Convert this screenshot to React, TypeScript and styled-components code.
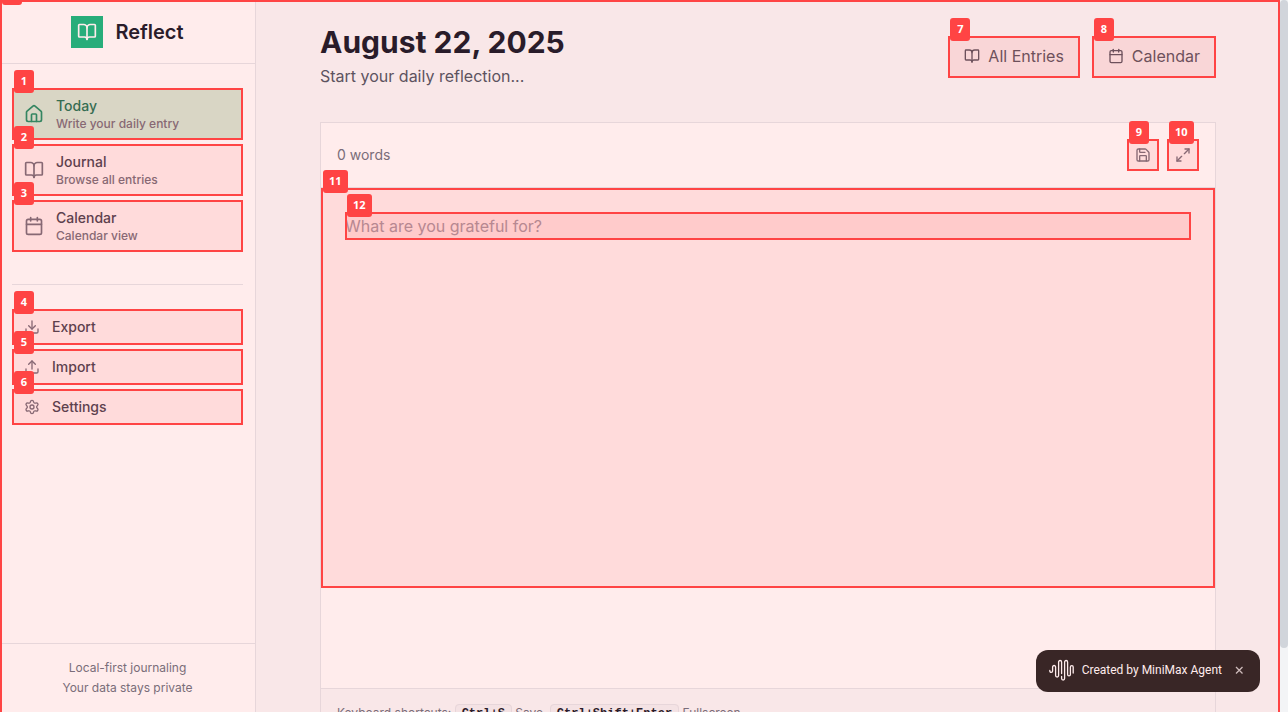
import React from "react";
import styled, { createGlobalStyle, css } from "styled-components";
import {
  BookOpen,
  Calendar,
  Download,
  House,
  Maximize2,
  Save,
  Settings,
  Upload,
} from "lucide-react";

const color = {
  ink: "#111827",
  heading: "#374151",
  body: "#4b5563",
  muted: "#6b7280",
  faint: "#9ca3af",
  thumb: "#d1d5db",
  line: "#e5e7eb",
  soft: "#f3f4f6",
  page: "#f9fafb",
  mark: "#ff4444",
};

const GlobalStyle = createGlobalStyle`
  *, *::before, *::after { box-sizing: border-box; }
  body {
    margin: 0;
    font-family: Inter, "Liberation Sans", sans-serif;
    font-size: 16px;
    line-height: 24px;
    color: ${color.ink};
    background: ${color.page};
  }
  h1, p { margin: 0; }
  a { color: inherit; text-decoration: none; }
  button { font: inherit; cursor: pointer; }
`;

const Window = styled.div`
  display: flex;
  height: 100vh;
  overflow: hidden;
`;

const App = styled.div`
  position: relative;
  display: flex;
  flex: 1;
  min-width: 0;
  overflow: hidden;
`;

const ScrollTrack = styled.div`
  width: 8px;
  flex: none;
  background: ${color.soft};
`;

const ScrollThumb = styled.div`
  height: 91%;
  border-radius: 4px;
  background: ${color.thumb};
`;

/* Numbered highlight laid over an interactive element */
const MarkBox = styled.span<{ $page?: boolean }>`
  position: absolute;
  inset: 0;
  z-index: ${(p) => (p.$page ? 1 : 2)};
  border: 2px solid ${color.mark};
  background: rgba(255, 68, 68, 0.1);
  pointer-events: none;
  ${(p) => p.$page && css`border-bottom: 0;`}
`;

const MarkLabel = styled.span`
  position: absolute;
  top: -20px;
  left: 0;
  min-width: 20px;
  padding: 3px 6px 5px;
  border-radius: 3px;
  background: ${color.mark};
  color: #fff;
  font: bold 11px/15px "Open Sans", "Noto Sans", sans-serif;
  text-align: center;
`;

function Mark({ n, page }: { n: number; page?: boolean }) {
  return (
    <MarkBox $page={page} aria-hidden="true">
      <MarkLabel>{n}</MarkLabel>
    </MarkBox>
  );
}

const Sidebar = styled.aside`
  display: flex;
  flex-direction: column;
  flex: none;
  width: 256px;
  background: #fff;
  border-right: 1px solid ${color.line};
`;

const Brand = styled.div`
  display: flex;
  align-items: center;
  justify-content: center;
  gap: 12px;
  height: 64px;
  border-bottom: 1px solid ${color.line};
  font-size: 20px;
  font-weight: 600;
  line-height: 28px;
`;

const BrandMark = styled.span`
  display: grid;
  place-items: center;
  width: 32px;
  height: 32px;
  background: #10b981;
  color: #fff;
`;

const Nav = styled.nav`
  display: flex;
  flex-direction: column;
  gap: 4px;
  padding: 24px 12px 32px;
`;

const NavLink = styled.a<{ $active?: boolean }>`
  position: relative;
  display: flex;
  align-items: center;
  gap: 12px;
  padding: 8px 12px;
  font-size: 14px;
  font-weight: 500;
  line-height: 20px;
  color: ${(p) => (p.$active ? "#047857" : color.heading)};
  background: ${(p) => (p.$active ? "#d1fae5" : "transparent")};
  svg { color: ${(p) => (p.$active ? "#059669" : color.muted)}; }
`;

const NavHint = styled.span`
  display: block;
  font-size: 12px;
  line-height: 16px;
  color: ${color.muted};
`;

const Tools = styled.div`
  display: flex;
  flex-direction: column;
  gap: 4px;
  margin: 0 12px;
  padding-top: 24px;
  border-top: 1px solid ${color.line};
`;

const ToolButton = styled.button`
  position: relative;
  display: flex;
  align-items: center;
  gap: 12px;
  padding: 8px 12px;
  border: 0;
  background: transparent;
  font-size: 14px;
  font-weight: 500;
  line-height: 20px;
  color: ${color.heading};
  svg { color: ${color.muted}; }
`;

const SidebarFooter = styled.footer`
  display: grid;
  gap: 4px;
  margin-top: auto;
  padding: 16px;
  border-top: 1px solid ${color.line};
  text-align: center;
  font-size: 12px;
  line-height: 16px;
  color: ${color.muted};
`;

const Main = styled.main`
  flex: 1;
  min-width: 0;
  padding: 24px 64px;
`;

const Content = styled.div`
  max-width: 896px;
  margin: 0 auto;
`;

const PageHeader = styled.header`
  display: flex;
  align-items: center;
  justify-content: space-between;
  margin-bottom: 32px;
`;

const Title = styled.h1`
  margin-bottom: 4px;
  font-size: 30px;
  font-weight: 700;
  line-height: 36px;
`;

const Subtitle = styled.p`
  padding-bottom: 2px;
  color: ${color.body};
`;

const Actions = styled.div`
  display: flex;
  gap: 12px;
`;

const ActionButton = styled.button`
  position: relative;
  display: flex;
  align-items: center;
  gap: 8px;
  padding: 8px 16px 10px;
  border: 0;
  background: transparent;
  color: ${color.body};
`;

const Card = styled.section`
  border: 1px solid ${color.line};
  background: #fff;
`;

const Toolbar = styled.div`
  display: flex;
  align-items: center;
  justify-content: space-between;
  padding: 16px;
  border-bottom: 1px solid ${color.line};
  font-size: 14px;
  line-height: 20px;
  color: ${color.muted};
`;

const IconButtons = styled.div`
  display: flex;
  gap: 8px;
`;

const IconButton = styled.button`
  position: relative;
  display: grid;
  place-items: center;
  width: 32px;
  height: 32px;
  padding: 0;
  border: 0;
  background: transparent;
  color: ${color.muted};
`;

const EditorArea = styled.div`
  min-height: 500px;
`;

const Editor = styled.div`
  position: relative;
  min-height: 400px;
  padding: 24px;
`;

const Field = styled.div`
  position: relative;
  display: flex;
`;

const EntryInput = styled.textarea`
  width: 100%;
  height: 28px;
  padding: 0;
  border: 0;
  outline: 0;
  resize: none;
  overflow: hidden;
  background: transparent;
  font: inherit;
  line-height: 28px;
  color: ${color.ink};
  &::placeholder { color: ${color.faint}; }
`;

const Shortcuts = styled.footer`
  padding: 16px;
  border-top: 1px solid ${color.line};
  background: ${color.page};
  font-size: 12px;
  line-height: 16px;
  color: ${color.muted};
`;

const Key = styled.kbd`
  padding: 2px 6px;
  border: 1px solid ${color.line};
  border-radius: 4px;
  background: ${color.soft};
  font: 600 12px/16px "Liberation Mono", monospace;
  color: ${color.ink};
`;

const Credit = styled.div`
  position: absolute;
  right: 20px;
  bottom: 20px;
  display: flex;
  align-items: center;
  gap: 8px;
  height: 42px;
  padding: 0 12px 2px;
  border-radius: 12px;
  background: #232323;
  color: #fff;
  font: 400 12px/16px Roboto, sans-serif;
`;

const CreditClose = styled.button`
  padding: 0 3px;
  border: 0;
  background: transparent;
  color: #c8c8c8;
  line-height: 0;
`;

function WaveLogo() {
  return (
    <svg width="26" height="22" viewBox="-1 0 26 22" fill="none" stroke="currentColor" strokeWidth="1.3" strokeLinecap="round" aria-hidden="true">
      <path d="M.8 11.500v.5a1.400 1.400 0 0 0 2.800 0V8a1.500 1.500 0 0 1 3 0v8.500a1.500 1.500 0 0 0 3 0V3a1.500 1.500 0 0 1 3 0v11.500" />
      <path d="M12.600 17.500v2a1.500 1.500 0 0 0 3 0V3a1.500 1.500 0 0 1 3 0v12.500a1.400 1.400 0 0 0 2.800 0V8a1.400 1.400 0 0 1 2.800 0V14" />
    </svg>
  );
}

const links = [
  { label: "Today", hint: "Write your daily entry", Icon: House, active: true },
  { label: "Journal", hint: "Browse all entries", Icon: BookOpen },
  { label: "Calendar", hint: "Calendar view", Icon: Calendar },
];

const tools = [
  { label: "Export", Icon: Download },
  { label: "Import", Icon: Upload },
  { label: "Settings", Icon: Settings },
];

export default function Reflect() {
  return (
    <>
      <GlobalStyle />
      <Window>
        <App>
          <Sidebar>
            <Brand>
              <BrandMark><BookOpen size={20} /></BrandMark>
              Reflect
            </Brand>
            <Nav>
              {links.map(({ label, hint, Icon, active }, i) => (
                <NavLink key={label} href="#" $active={active}>
                  <Icon size={20} />
                  <span>
                    {label}
                    <NavHint>{hint}</NavHint>
                  </span>
                  <Mark n={i + 1} />
                </NavLink>
              ))}
            </Nav>
            <Tools>
              {tools.map(({ label, Icon }, i) => (
                <ToolButton key={label} type="button">
                  <Icon size={16} />
                  {label}
                  <Mark n={i + 4} />
                </ToolButton>
              ))}
            </Tools>
            <SidebarFooter>
              <p>Local-first journaling</p>
              <p>Your data stays private</p>
            </SidebarFooter>
          </Sidebar>

          <Main>
            <Content>
              <PageHeader>
                <div>
                  <Title>August 22, 2025</Title>
                  <Subtitle>Start your daily reflection...</Subtitle>
                </div>
                <Actions>
                  <ActionButton type="button">
                    <BookOpen size={16} />
                    All Entries
                    <Mark n={7} />
                  </ActionButton>
                  <ActionButton type="button">
                    <Calendar size={16} />
                    Calendar
                    <Mark n={8} />
                  </ActionButton>
                </Actions>
              </PageHeader>

              <Card>
                <Toolbar>
                  <span>0 words</span>
                  <IconButtons>
                    <IconButton type="button" aria-label="Save">
                      <Save size={16} />
                      <Mark n={9} />
                    </IconButton>
                    <IconButton type="button" aria-label="Fullscreen">
                      <Maximize2 size={16} />
                      <Mark n={10} />
                    </IconButton>
                  </IconButtons>
                </Toolbar>
                <EditorArea>
                  <Editor>
                    <Mark n={11} />
                    <Field>
                      <EntryInput aria-label="Journal entry" placeholder="What are you grateful for?" />
                      <Mark n={12} />
                    </Field>
                  </Editor>
                </EditorArea>
                <Shortcuts>
                  Keyboard shortcuts: <Key>Ctrl+S</Key> Save, <Key>Ctrl+Shift+Enter</Key> Fullscreen
                </Shortcuts>
              </Card>
            </Content>
          </Main>

          <Credit>
            <WaveLogo />
            <span>Created by MiniMax Agent</span>
            <CreditClose type="button" aria-label="Close">
              <svg width="12" height="12" viewBox="0 0 12 12" stroke="currentColor" strokeWidth="1.3" aria-hidden="true">
                <path d="M3 3l6.500 6.500M9.500 3L3 9.500" />
              </svg>
            </CreditClose>
          </Credit>
          <Mark n={0} page />
        </App>
        <ScrollTrack><ScrollThumb /></ScrollTrack>
      </Window>
    </>
  );
}
